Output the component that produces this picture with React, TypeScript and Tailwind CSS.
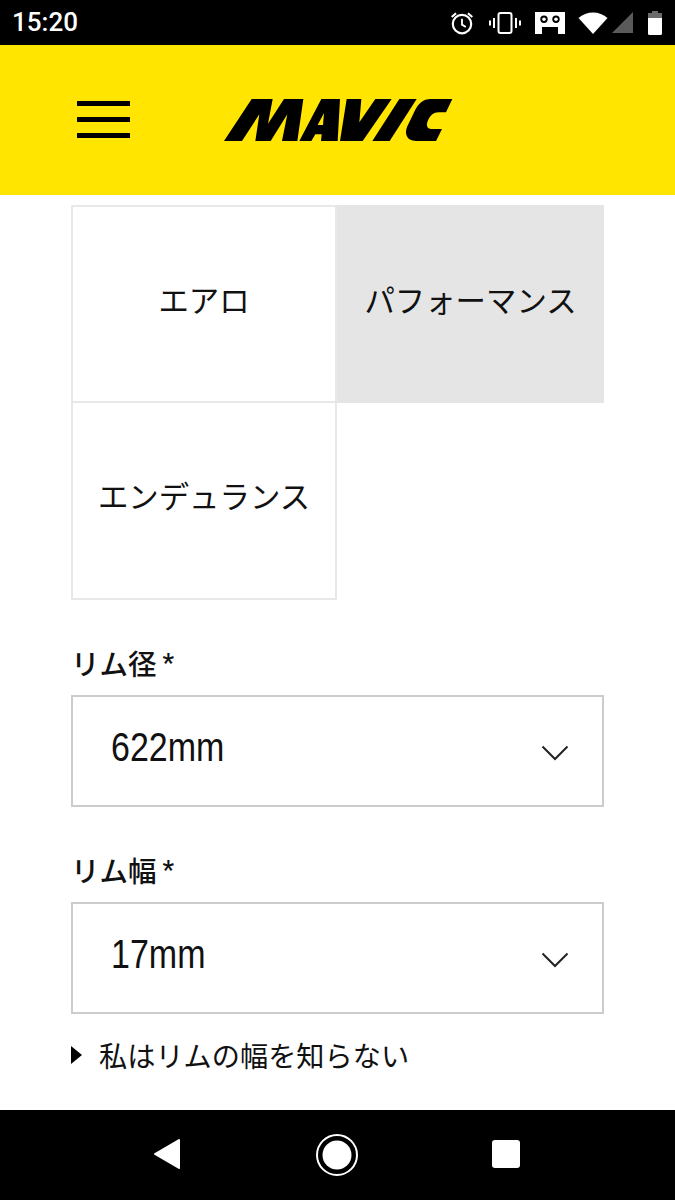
const jp = "font-['Noto_Sans_CJK_JP','Noto_Sans',sans-serif]";

function Logo() {
  return (
    <svg width="260" height="70" viewBox="0 0 780 210" className="ml-[80px]" fill="#000">
      <path d="M125 42 L42 168 L96 168 L148 88 L136 168 L182 168 L232 88 L216 168 L262 168 L280 42 L222 42 L174 116 L188 42 Z" />
      <path d="M334 42 L390 42 L383 168 L333 168 L335 148 L316 148 L304 168 L268 168 Z M342 84 L323 120 L339 120 Z" fillRule="evenodd" />
      <path d="M410 42 L454 42 L448 112 L496 42 L545 42 L458 168 L390 168 Z" />
      <path d="M568 42 L620 42 L539 168 L487 168 Z" />
      <path d="M662 42 L727 42 L708 82 L686 82 C670 82 662 90 654 106 C648 120 650 132 664 132 L696 132 L678 168 L618 168 C590 168 582 146 592 124 L614 78 C624 56 640 42 662 42 Z" />
    </svg>
  );
}

function StatusIcons() {
  return (
    <div className="ml-auto flex items-center pr-[12px]">
      <svg width="26" height="26" viewBox="0 0 24 24" fill="none" stroke="#fff" strokeWidth="2">
        <circle cx="12" cy="13" r="8.5" />
        <path d="M12 8v5.5l3.5 2.2" strokeWidth="1.7" />
        <path d="M2.5 6.5 6.5 3M21.5 6.5 17.5 3" />
      </svg>
      <svg width="32" height="22" viewBox="0 0 32 22" fill="none" stroke="#fff" className="ml-[14px]">
        <rect x="9.5" y="1" width="13" height="20" rx="2" strokeWidth="2" />
        <path d="M5 6v10M27 6v10" strokeWidth="2" />
        <path d="M1 8.5v5M31 8.5v5" strokeWidth="2" />
      </svg>
      <svg width="30" height="22" viewBox="0 0 30 22" className="ml-[14px]">
        <path fill="#fff" d="M0 0H30V22H23V15H7V22H0Z" />
        <circle cx="9" cy="7.2" r="3.7" fill="#000" />
        <circle cx="21" cy="7.2" r="3.7" fill="#000" />
        <circle cx="9" cy="7.2" r="1.8" fill="#fff" />
        <circle cx="21" cy="7.2" r="1.8" fill="#fff" />
      </svg>
      <svg width="30" height="22" viewBox="0 0 30 22" className="ml-[13px]">
        <path fill="#fff" d="M0.5 6 C8 -1.5 22 -1.5 29.5 6 L15 22 Z" />
      </svg>
      <svg width="22" height="22" viewBox="0 0 22 22" className="ml-[4px]">
        <path fill="#5a5a5a" d="M21 0 V21 H0 Z" />
      </svg>
      <svg width="16" height="24" viewBox="0 0 16 24" className="ml-[13px]">
        <path fill="#6b6b6b" d="M5 0h6v2h4v7H1V2h4Z" />
        <path fill="#fff" d="M1 7h14v15.5a1.5 1.5 0 0 1-1.5 1.5h-11A1.5 1.5 0 0 1 1 22.5Z" />
      </svg>
    </div>
  );
}

function Select({ label, value }: { label: string; value: string }) {
  return (
    <div className="mt-[46px]">
      <div className={`${jp} h-[40px] pb-[6px] flex items-center text-[28.5px] font-medium text-[#111111]`}>
        {label}
        <span className="ml-[6px] text-[26px] font-['Roboto',sans-serif] font-medium">*</span>
      </div>
      <div className="mt-[9px] h-[112px] border-2 border-[#cccccc] flex items-center justify-between pl-[38px] pr-[33px]">
        <span className="inline-block w-[120px] origin-left scale-x-[0.85] whitespace-nowrap font-['Liberation_Sans',sans-serif] text-[40px] text-[#111111] -mt-[8px]">
          {value}
        </span>
        <svg width="28" height="16" viewBox="0 0 28 16" fill="none" stroke="#222" strokeWidth="2" className="mt-[4px]">
          <path d="M1.5 1.5 14 14 26.5 1.5" />
        </svg>
      </div>
    </div>
  );
}

const cell = `${jp} flex items-center justify-center pb-[9px] text-[30.4px] text-[#111111]`;

export default function App() {
  return (
    <div className="h-[1200px] w-[675px] flex flex-col overflow-hidden bg-white">
      <div className="h-[45px] bg-black flex items-center pl-[12px]">
        <span className="font-['Roboto',sans-serif] font-medium text-[26px] text-white">15:20</span>
        <StatusIcons />
      </div>
      <header className="h-[150px] bg-[#ffe500] flex items-center pl-[77px]">
        <div className="flex flex-col gap-[11px] w-[53px] -mt-[2px]">
          <span className="block h-[5px] bg-black" />
          <span className="block h-[5px] bg-black" />
          <span className="block h-[5px] bg-black" />
        </div>
        <Logo />
      </header>
      <main className="flex-1 pt-[10px] pl-[71px] pr-[71px]">
        <div className="grid grid-cols-[266px_267px] grid-rows-[198px_197px]">
          <div className={`${cell} border-2 border-[#e8e8e8]`}>エアロ</div>
          <div className={`${cell} bg-[#e5e5e5]`}>パフォーマンス</div>
          <div className={`${cell} border-2 border-t-0 border-[#e8e8e8]`}>エンデュランス</div>
        </div>
        <Select label="リム径" value="622mm" />
        <Select label="リム幅" value="17mm" />
        <div className={`${jp} mt-[27px] h-[28px] flex items-center text-[28.2px] text-[#111111]`}>
          <svg width="11" height="18" viewBox="0 0 11 18" className="mr-[17px]">
            <path d="M0 0 11 9 0 18Z" fill="#000" />
          </svg>
          私はリムの幅を知らない
        </div>
      </main>
      <nav className="h-[90px] bg-black flex items-center pl-[153px]">
        <svg width="28" height="32" viewBox="0 0 28 32" className="-mt-[2px]">
          <path d="M26 2 2 16 26 30Z" fill="#fff" stroke="#fff" strokeWidth="2" strokeLinejoin="round" />
        </svg>
        <svg width="42" height="42" viewBox="0 0 42 42" className="ml-[135px] -mt-[1px]">
          <circle cx="21" cy="21" r="20" fill="none" stroke="#fff" strokeWidth="2" />
          <circle cx="21" cy="21" r="14.5" fill="#fff" />
        </svg>
        <span className="ml-[134px] -mt-[2px] block h-[28px] w-[28px] rounded-[3px] bg-white" />
      </nav>
    </div>
  );
}
